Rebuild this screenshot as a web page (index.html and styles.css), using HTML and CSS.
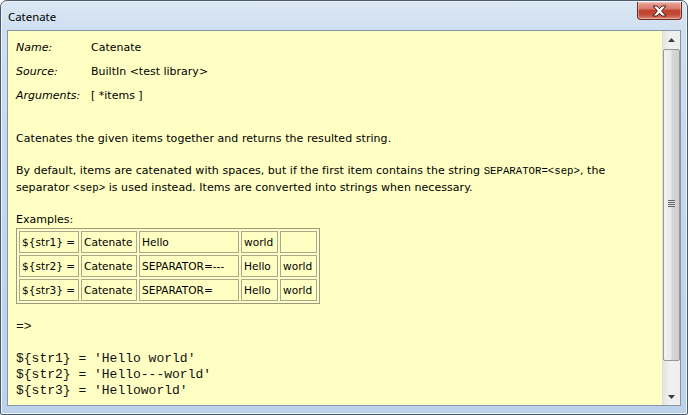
FILE: index.html
```html
<!DOCTYPE html>
<html>
<head>
<meta charset="utf-8">
<link rel="stylesheet" href="styles.css">
</head>
<body>
<div class="window">
  <div class="titlebar">
    <div class="title">Catenate</div>
    <div class="close">
      <svg width="17" height="12" viewBox="0 0 17 12">
        <path d="M2 1 L6 1 L8.5 3.8 L11 1 L15 1 L10.6 6 L15 11 L11 11 L8.5 8.2 L6 11 L2 11 L6.4 6 Z" fill="#fff" stroke="#4a1a14" stroke-width="1" stroke-linejoin="round"/>
      </svg>
    </div>
  </div>
  <div class="client">
    <div class="doc">
      <table class="meta">
        <tr><td class="lbl">Name:</td><td>Catenate</td></tr>
        <tr><td class="lbl">Source:</td><td>BuiltIn &lt;test library&gt;</td></tr>
        <tr><td class="lbl">Arguments:</td><td>[ *items ]</td></tr>
      </table>
      <p class="para first">Catenates the given items together and returns the resulted string.</p>
      <p class="para"><span>By default, items are catenated with spaces, but if the first item contains the string </span><code>SEPARATOR=&lt;sep&gt;</code><span>, the</span><br><span>separator </span><code>&lt;sep&gt;</code><span> is used instead. Items are converted into strings when necessary.</span></p>
      <div class="examples">Examples:</div>
      <table class="ex">
        <tr><td class="w1">${str1} =</td><td class="w2">Catenate</td><td class="w3">Hello</td><td class="w4">world</td><td class="w5"></td></tr>
        <tr><td>${str2} =</td><td>Catenate</td><td>SEPARATOR=---</td><td>Hello</td><td>world</td></tr>
        <tr><td>${str3} =</td><td>Catenate</td><td>SEPARATOR=</td><td>Hello</td><td>world</td></tr>
      </table>
<pre class="result">=&gt;

${str1} = 'Hello world'
${str2} = 'Hello---world'
${str3} = 'Helloworld'</pre>
    </div>
    <div class="scrollbar">
      <div class="arrow up"><svg width="7" height="4" viewBox="0 0 7 4"><path d="M0 4 L3.5 0 L7 4 Z" fill="#3c3c3c"/></svg></div>
      <div class="thumb"><div class="grip"></div></div>
      <div class="track"></div>
      <div class="arrow down"><svg width="7" height="4" viewBox="0 0 7 4"><path d="M0 0 L7 0 L3.5 4 Z" fill="#3c3c3c"/></svg></div>
    </div>
  </div>
</div>
</body>
</html>
```
FILE: styles.css
```css
html, body {
  margin: 0;
  padding: 0;
  background: #ffffff;
}
.window {
  width: 688px;
  height: 415px;
  box-sizing: border-box;
  border: 1px solid #4b5a6b;
  border-radius: 7px 7px 2px 2px;
  background: linear-gradient(to bottom, #dbe7f4 0px, #cfdff0 30px, #c3d7ee 200px, #bcd2eb 415px);
  display: flex;
  flex-direction: column;
  overflow: hidden;
  box-shadow: inset 0 0 0 1px #eef4fb;
}
.titlebar {
  height: 29px;
  flex: none;
  display: flex;
  justify-content: space-between;
  align-items: flex-start;
  padding: 0 5px 0 7px;
}
.title {
  font-family: "Noto Sans", "DejaVu Sans", sans-serif;
  font-size: 11.4px;
  color: #000;
  padding-top: 8px;
  line-height: 16px;
}
.close {
  width: 45px;
  height: 18px;
  margin-top: 1px;
  box-sizing: border-box;
  border: 1px solid #6e2b22;
  border-top: none;
  border-radius: 0 0 4px 4px;
  background: linear-gradient(to bottom, #e9a99c 0%, #d7786a 40%, #c0432f 50%, #c34a36 75%, #db8a73 100%);
  display: flex;
  align-items: center;
  justify-content: center;
  box-shadow: inset 0 0 0 1px rgba(255,255,255,0.35);
}
.client {
  flex: 1;
  margin: 0 6px 8px 6px;
  border: 1px solid #8596ab;
  display: flex;
  min-height: 0;
  background: #ffffc4;
}
.doc {
  flex: 1;
  padding: 5px 8px 0 8px;
  font-family: "DejaVu Sans", sans-serif;
  font-size: 11px;
  color: #000;
  overflow: hidden;
}
.meta {
  border-collapse: collapse;
}
.meta td {
  padding: 5px 0;
  line-height: 14px;
  white-space: nowrap;
}
.meta .lbl {
  font-style: italic;
  width: 75px;
}
.para {
  margin: 0;
  line-height: 17px;
  letter-spacing: 0.05px;
}
.para.first {
  margin-top: 22px;
  margin-bottom: 15px;
}
code {
  font-family: "Liberation Mono", monospace;
  font-size: 10.7px;
  line-height: 1;
  letter-spacing: 0;
}
.examples {
  margin-top: 16px;
  line-height: 16px;
}
.ex {
  border: 1px solid #9a9a80;
  border-spacing: 2px;
}
.ex td {
  border: 1px solid #a8a890;
  padding: 3px 2px;
  font-size: 10.6px;
  line-height: 14px;
  white-space: nowrap;
  box-sizing: border-box;
}
.ex .w1 { width: 60px; }
.ex .w2 { width: 56px; }
.ex .w3 { width: 100px; }
.ex .w4 { width: 37px; }
.ex .w5 { width: 37px; }
.result {
  margin: 15px 0 0 0;
  font-family: "Liberation Mono", monospace;
  font-size: 13px;
  line-height: 16px;
  color: #111;
}
.scrollbar {
  width: 17px;
  flex: none;
  display: flex;
  flex-direction: column;
  background: linear-gradient(to right, #e3e3e3, #f1f1f1 40%, #eeeeee);
  border-left: 1px solid #e0e0e0;
}
.arrow {
  height: 17px;
  flex: none;
  display: flex;
  align-items: center;
  justify-content: center;
}
.thumb {
  height: 312px;
  flex: none;
  margin: 1px 0 0 0;
  box-sizing: border-box;
  border: 1px solid #979797;
  border-radius: 2px;
  background: linear-gradient(to right, #f3f3f3 0%, #e9e9e9 45%, #d6d6d6 55%, #cfcfcf 100%);
  display: flex;
  align-items: center;
  justify-content: center;
}
.grip {
  width: 7px;
  height: 7px;
  background: repeating-linear-gradient(to bottom, #606060 0px, #606060 1px, #e8e8e8 1px, #e8e8e8 2px);
  margin-top: -4px;
}
.track {
  flex: 1;
}
```
